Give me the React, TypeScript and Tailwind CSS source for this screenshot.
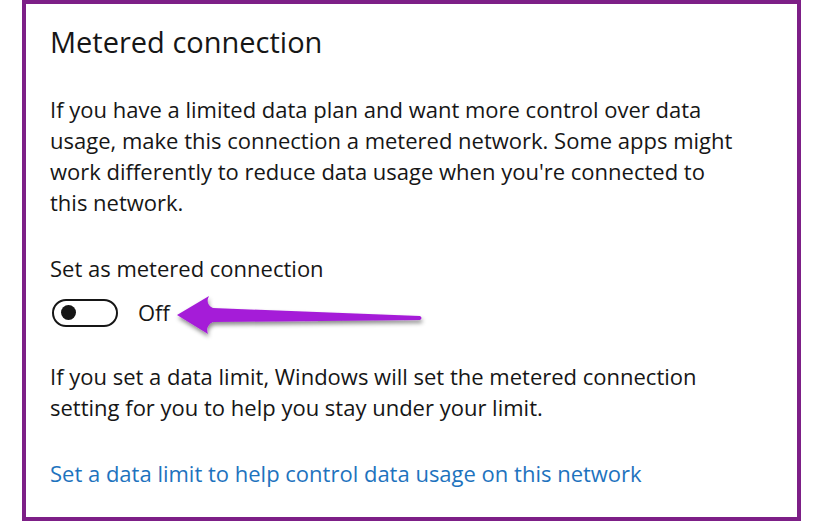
import React from "react";

export default function App() {
  return (
    <div className="relative w-[822px] h-[522px] bg-white overflow-hidden" style={{ fontFamily: '"Open Sans", "Noto Sans", sans-serif' }}>
      <div className="ml-[22px] w-[779px] h-[521px] border-4 border-[#7d1f87] pl-[24px] pt-[18px] text-[#161616]">
        <h1 className="text-[29px] leading-[40px]">Metered connection</h1>
        <p className="mt-[32px] text-[22px] leading-[31px] w-[685px]">
          If you have a limited data plan and want more control over data usage, make this connection a metered network. Some apps might work differently to reduce data usage when you're connected to this network.
        </p>
        <p className="mt-[35px] text-[22px] leading-[31px]">Set as metered connection</p>
        <div className="mt-[13px] flex items-center gap-[20px]">
          <div className="ml-[2px] w-[66px] h-[28px] rounded-full border-2 border-[#161616] flex items-center pl-[7px]">
            <div className="w-[15px] h-[15px] rounded-full bg-[#161616]" />
          </div>
          <span className="text-[22px] leading-[31px]">Off</span>
        </div>
        <p className="mt-[33px] text-[22px] leading-[31px] w-[685px]">
          If you set a data limit, Windows will set the metered connection setting for you to help you stay under your limit.
        </p>
        <p className="mt-[35px] text-[22px] leading-[31px] text-[#1e73be]">
          Set a data limit to help control data usage on this network
        </p>
      </div>
      <svg className="absolute left-0 top-0" width="822" height="522" viewBox="0 0 822 522">
        <defs>
          <filter id="sh" x="-10%" y="-50%" width="120%" height="200%">
            <feDropShadow dx="1" dy="3" stdDeviation="2" floodColor="#000" floodOpacity="0.45" />
          </filter>
        </defs>
        <path
          d="M177,315 L209,296 Q205,304 213,308 L420,316 Q423,318 420,320 L213,322 Q205,326 208,334 Z"
          fill="#a51ed8"
          filter="url(#sh)"
        />
      </svg>
    </div>
  );
}
